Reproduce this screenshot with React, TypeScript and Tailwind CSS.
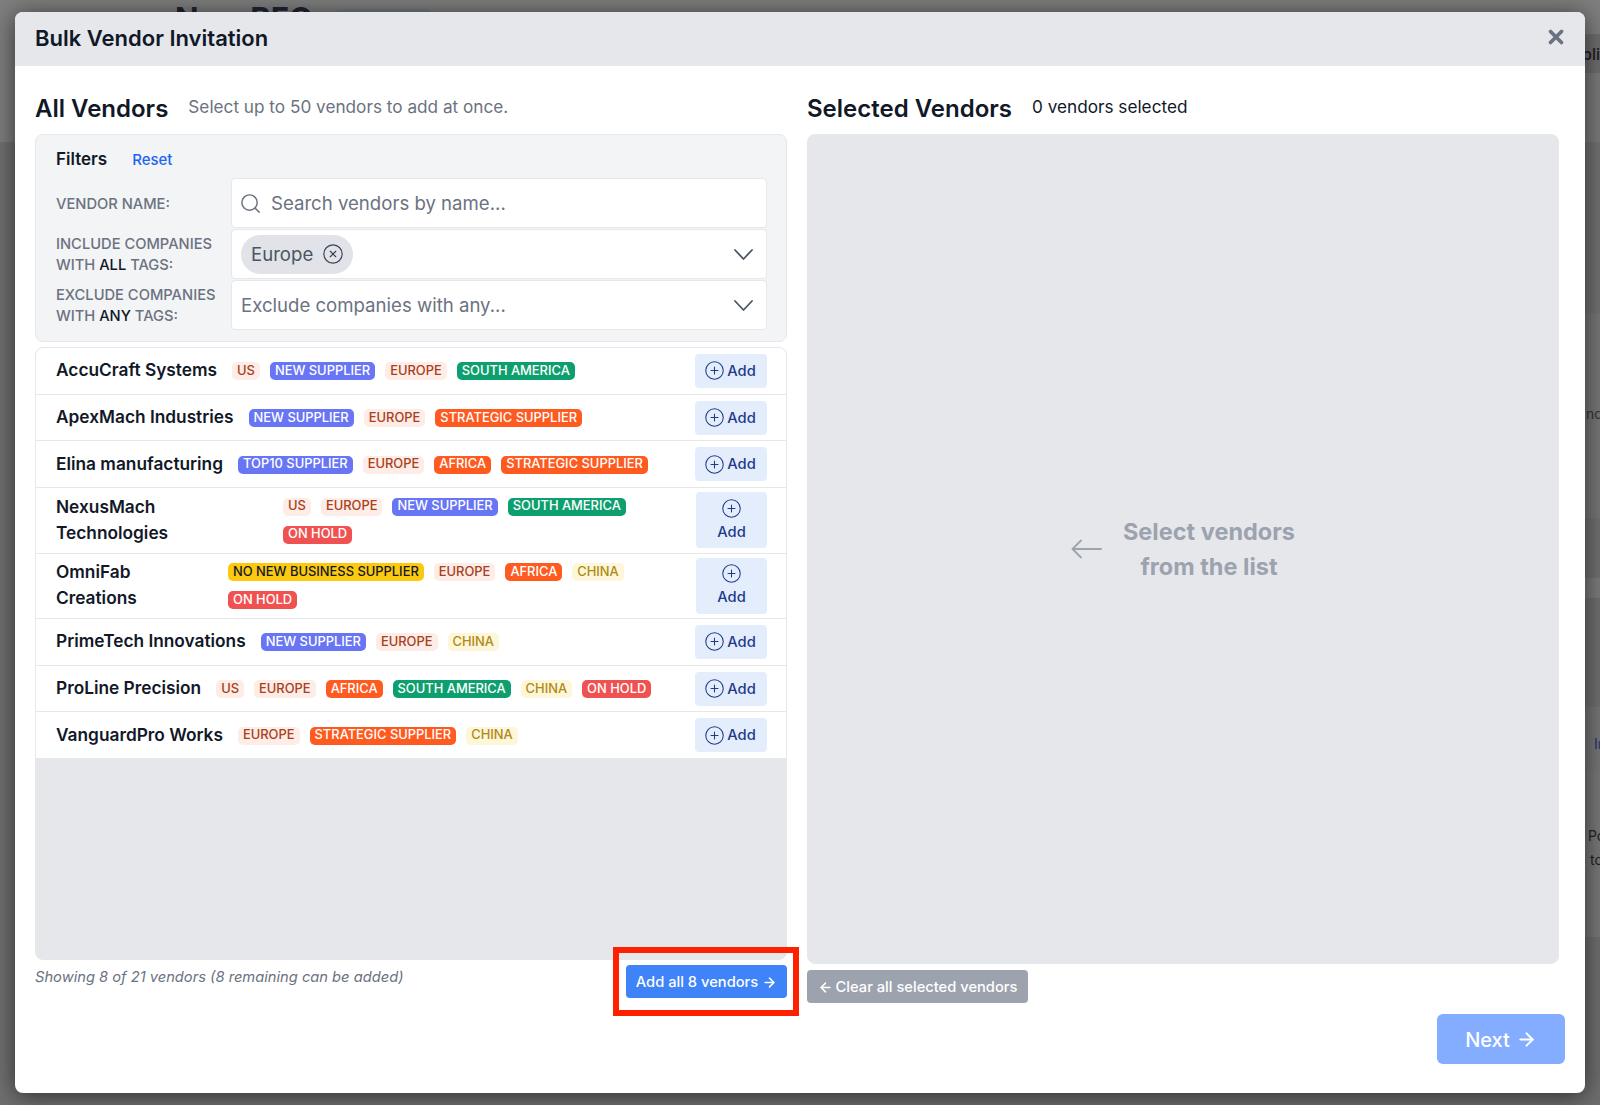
import React from "react";
import { Search, CircleX, CirclePlus, X, ArrowRight, ArrowLeft } from "lucide-react";

type TagKey = "US" | "NEW" | "EU" | "SA" | "STRAT" | "TOP" | "AF" | "CN" | "NONEW" | "HOLD";

const tagMap: Record<TagKey, { label: string; cls: string }> = {
  US: { label: "US", cls: "bg-[#feece6] text-[#a8401c]" },
  EU: { label: "Europe", cls: "bg-[#feece6] text-[#a8401c]" },
  NEW: { label: "New supplier", cls: "bg-[#6875f5] text-white" },
  TOP: { label: "Top10 supplier", cls: "bg-[#6875f5] text-white" },
  SA: { label: "South America", cls: "bg-[#0e9f6e] text-white" },
  STRAT: { label: "Strategic supplier", cls: "bg-[#ff5a1f] text-white" },
  AF: { label: "Africa", cls: "bg-[#ff5a1f] text-white" },
  CN: { label: "China", cls: "bg-[#fdf6d8] text-[#b08a16]" },
  NONEW: { label: "No new business supplier", cls: "bg-[#fdc90f] text-[#111827]" },
  HOLD: { label: "On hold", cls: "bg-[#f05252] text-white" },
};

const vendors: { name: string; tags: TagKey[]; nameCls?: string; tall?: boolean }[] = [
  { name: "AccuCraft Systems", tags: ["US", "NEW", "EU", "SA"] },
  { name: "ApexMach Industries", tags: ["NEW", "EU", "STRAT"] },
  { name: "Elina manufacturing", tags: ["TOP", "EU", "AF", "STRAT"] },
  { name: "NexusMach Technologies", tags: ["US", "EU", "NEW", "SA", "HOLD"], nameCls: "w-[227px] shrink-0 pr-[100px]", tall: true },
  { name: "OmniFab Creations", tags: ["NONEW", "EU", "AF", "CN", "HOLD"], nameCls: "w-[172px] shrink-0 pr-[60px]", tall: true },
  { name: "PrimeTech Innovations", tags: ["NEW", "EU", "CN"] },
  { name: "ProLine Precision", tags: ["US", "EU", "AF", "SA", "CN", "HOLD"] },
  { name: "VanguardPro Works", tags: ["EU", "STRAT", "CN"] },
];

function Tag({ k }: { k: TagKey }) {
  const t = tagMap[k];
  return (
    <span className={`inline-flex h-[18px] items-center rounded-[5px] px-[5px] text-[12.9px] font-medium uppercase leading-none whitespace-nowrap ${t.cls}`}>
      {t.label}
    </span>
  );
}

function Chevron() {
  return (
    <svg width="19" height="11" viewBox="0 0 19 11" fill="none" stroke="#4b5563" strokeWidth="1.8" strokeLinecap="round" strokeLinejoin="round">
      <polyline points="1,1 9.5,10 18,1" />
    </svg>
  );
}

function VendorRow({ name, tags, nameCls, tall }: { name: string; tags: TagKey[]; nameCls?: string; tall?: boolean }) {
  return (
    <div className={`flex items-center border-b border-[#e5e7eb] bg-white pl-5 pr-[19px] ${tall ? "h-[65.5px]" : "h-[46.7px]"}`}>
      <div className={`mb-px text-[17.3px] font-semibold leading-[26px] text-[#111827] ${nameCls ?? "mr-[15px] whitespace-nowrap"}`}>{name}</div>
      <div className="flex min-w-0 flex-1 flex-wrap items-center gap-x-[10px] gap-y-[10px] pr-[20px] pt-px">
        {tags.map((t, i) => (
          <Tag key={i} k={t} />
        ))}
      </div>
      {tall ? (
        <button className="flex h-[56px] w-[71px] shrink-0 flex-col items-center justify-center gap-[2px] rounded bg-[#e4edfc] text-[14.7px] font-medium text-[#1e3a8a]">
          <CirclePlus size={21} strokeWidth={1.2} />
          Add
        </button>
      ) : (
        <button className="flex h-[34px] w-[72px] shrink-0 items-center justify-center gap-[2px] rounded bg-[#e4edfc] pr-[2px] text-[14.7px] font-medium text-[#1e3a8a]">
          <CirclePlus size={21} strokeWidth={1.2} />
          Add
        </button>
      )}
    </div>
  );
}

function FilterRow({ label, children }: { label: React.ReactNode; children: React.ReactNode }) {
  return (
    <div className="flex h-[50px] items-center">
      <div className="w-[175px] shrink-0 pt-[2px] text-[14.7px] font-medium uppercase leading-[21px] whitespace-nowrap text-[#6b7280]">{label}</div>
      <div className="flex h-full flex-1 items-center rounded border border-[#e5e7eb] bg-white">{children}</div>
    </div>
  );
}

export default function App() {
  return (
    <div className="relative h-[1105px] w-[1600px] overflow-hidden bg-[#707070] font-[Inter,sans-serif]">
      {/* dimmed page behind the dialog */}
      <div className="flex h-full text-[#222]">
        <div className="w-[800px] shrink-0">
          <div className="h-[142px] bg-[#7e7e7e] pl-[175px] pt-[1px] text-[31px] font-bold leading-[36px] text-[#1f2430]">
            <div className="flex items-center gap-[23px]">
              <span>New RFQ</span>
              <span className="mt-[5px] h-[26px] w-[95px] rounded bg-[#6f7884]" />
            </div>
          </div>
        </div>
        <div className="flex w-[800px] shrink-0 flex-col">
          <div className="h-[34px] bg-[#7e7e7e]" />
          <div className="flex h-[39px] items-center bg-[#6d6d6d] pl-[782px] text-base font-medium whitespace-nowrap text-[#1c1c1c]">plicants</div>
          <div className="h-[69px] bg-[#7a7a7a]" />
          <div className="h-[172px] bg-[#717171]" />
          <div className="flex h-[204px] items-center bg-[#767676] pb-[4px] pl-[786px] text-sm whitespace-nowrap text-[#333]">nd</div>
          <div className="h-[60px] bg-[#707070]" />
          <div className="h-[20px] bg-[#7b7b7b]" />
          <div className="h-[109px] bg-[#6f6f6f]" />
          <div className="flex h-[64px] items-center bg-[#757575] pl-[794px] pt-[10px] text-sm font-medium whitespace-nowrap text-[#2f3a78]">In</div>
          <div className="flex h-[166px] flex-col justify-center gap-[4px] bg-[#777777] pb-[12px] pl-[788px] text-sm leading-[20px] whitespace-nowrap text-[#222]">
            <span>Po</span>
            <span className="pl-[2px]">to</span>
          </div>
          <div className="flex-1 bg-[#6e6e6e]" />
        </div>
      </div>

      {/* dialog */}
      <div className="absolute inset-0 pl-[15px] pt-[12px]">
        <div className="flex h-[1081px] w-[1570px] flex-col rounded-lg bg-white shadow-[0_3px_24px_rgba(0,0,0,0.6)]">
          <div className="flex h-[54px] shrink-0 items-center justify-between rounded-t-lg border-b border-[#e5e7eb] bg-[#e5e7eb] pl-5 pr-[18px]">
            <h2 className="text-[22px] font-semibold text-[#111827]">Bulk Vendor Invitation</h2>
            <X size={22} strokeWidth={4} className="mb-[4px] text-[#6b7280]" />
          </div>

          <div className="flex flex-1 flex-col pl-5 pr-5">
            <div className="flex gap-5">
              {/* left column */}
              <div className="w-[752px] shrink-0">
                <div className="flex h-[68px] items-end gap-5 pb-[7px]">
                  <h3 className="text-2xl font-semibold leading-[36px] text-[#111827]">All Vendors</h3>
                  <p className="pb-[7px] text-[17.2px] leading-[26px] text-[#6b7280]">Select up to 50 vendors to add at once.</p>
                </div>
                <div className="h-[208px] rounded-lg border border-[#e5e7eb] bg-[#f3f4f6] pl-5 pr-[19px] pt-[14px]">
                  <div className="mb-[7px] flex h-[22px] items-center gap-[25px]">
                    <span className="text-[17px] font-semibold text-[#111827]">Filters</span>
                    <span className="text-[15px] font-medium text-[#1c64f2]">Reset</span>
                  </div>
                  <div className="flex flex-col gap-px">
                    <FilterRow label="Vendor name:">
                      <Search size={23} strokeWidth={1.5} className="ml-[7px] text-[#6b7280]" />
                      <span className="ml-[9px] pt-[1px] text-[18.6px] text-[#6b7280]">Search vendors by name...</span>
                    </FilterRow>
                    <FilterRow
                      label={
                        <>
                          Include companies
                          <br />
                          with <span className="text-[#111827]">all</span> tags:
                        </>
                      }
                    >
                      <span className="ml-[9px] flex h-[39px] w-[112px] items-center gap-[9px] rounded-full bg-[#e1e3e8] pl-[10px] pt-[2px] text-[18.6px] text-[#4b5563]">
                        Europe
                        <CircleX size={22} strokeWidth={1.25} className="mb-[2px] text-[#374151]" />
                      </span>
                      <span className="ml-auto mr-[13px] flex">
                        <Chevron />
                      </span>
                    </FilterRow>
                    <FilterRow
                      label={
                        <>
                          Exclude companies
                          <br />
                          with <span className="text-[#111827]">any</span> tags:
                        </>
                      }
                    >
                      <span className="ml-[9px] pt-[2px] text-[18.6px] text-[#6b7280]">Exclude companies with any...</span>
                      <span className="ml-auto mr-[13px] flex">
                        <Chevron />
                      </span>
                    </FilterRow>
                  </div>
                </div>
                <div className="mt-[5px] h-[613px] overflow-hidden rounded-lg border border-[#e5e7eb] bg-[#e5e7eb]">
                  {vendors.map((v) => (
                    <VendorRow key={v.name} {...v} />
                  ))}
                </div>
                <div className="mt-[5px] flex items-start justify-between">
                  <p className="mt-px text-[14.7px] italic text-[#6b7280]">Showing 8 of 21 vendors (8 remaining can be added)</p>
                  <div className="relative">
                    <button className="flex h-[33px] w-[161px] items-center justify-center gap-1 rounded bg-[#3f83f8] pt-px text-[14.7px] font-medium text-white">
                      Add all 8 vendors
                      <ArrowRight size={15} strokeWidth={2.5} />
                    </button>
                    <div className="absolute -top-[18px] -right-[12px] -bottom-[18px] -left-[13px] border-[6px] border-[#ff2000]" />
                  </div>
                </div>
              </div>

              {/* right column */}
              <div className="w-[752px] shrink-0">
                <div className="flex h-[68px] items-end gap-5 pb-[7px]">
                  <h3 className="text-2xl font-semibold leading-[36px] text-[#111827]">Selected Vendors</h3>
                  <p className="pb-[7px] text-[17.2px] leading-[26px] text-[#111827]">0 vendors selected</p>
                </div>
                <div className="flex h-[830px] items-center justify-center gap-[21px] rounded-lg border border-[#e5e7eb] bg-[#e5e7eb]">
                  <svg width="31" height="20" viewBox="0 0 31 20" fill="none" stroke="#9ca3af" strokeWidth="1.8" strokeLinecap="round" strokeLinejoin="round">
                    <path d="M30 10H1.5M10 1.5 1.5 10 10 18.5" />
                  </svg>
                  <p className="text-center text-[23.5px] font-bold leading-[35px] text-[#9ca3af]">
                    Select vendors
                    <br />
                    from the list
                  </p>
                </div>
                <button className="mt-[6px] flex h-[33px] w-[221px] items-center justify-center gap-[3px] rounded bg-[#9ca3af] pt-px text-[14.7px] font-medium text-white">
                  <ArrowLeft size={15} strokeWidth={2.5} />
                  Clear all selected vendors
                </button>
              </div>
            </div>

            <div className="mt-[11px] flex justify-end">
              <button className="flex h-[50px] w-[128px] items-center justify-center gap-[6px] rounded-md bg-[#84adff] pt-px text-xl font-medium text-white">
                Next
                <ArrowRight size={21} strokeWidth={2.4} />
              </button>
            </div>
          </div>
        </div>
      </div>
    </div>
  );
}
